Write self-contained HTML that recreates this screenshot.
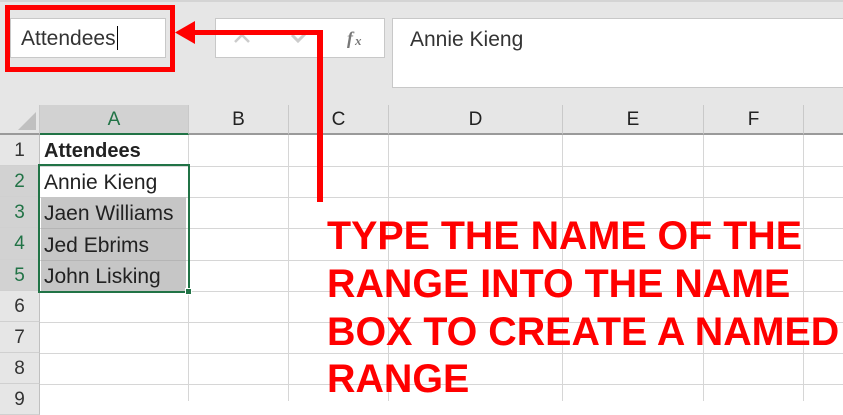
<!DOCTYPE html>
<html><head><meta charset="utf-8"><style>
*{margin:0;padding:0;box-sizing:border-box}
body{width:843px;height:401px;overflow:hidden;position:relative;background:#fff;font-family:"Liberation Sans",sans-serif}
.abs{position:absolute}
.top{left:0;top:0;width:843px;height:105px;background:#e6e6e6;border-top:2px solid #d4d4d4}
.box{background:#fff;border:1px solid #c8c8c8}
.ch{top:105px;height:30px;background:#e6e6e6;border-bottom:2px solid #9a9a9a;border-right:1px solid #c9c9c9;font-size:19px;color:#222;text-align:center;line-height:30px}
.rh{left:0;width:40px;background:#e6e6e6;border-bottom:1px solid #d0d0d0;border-right:1px solid #c0c0c0;font-size:19px;color:#333;text-align:center}
.vl{top:135px;width:1px;height:266px;background:#d6d6d6}
.hl{left:40px;width:803px;height:1px;background:#d6d6d6}
.cell{left:44px;font-size:21px;color:#222;white-space:nowrap}
.red{color:#f00;font-weight:bold;font-size:40px;left:327px;transform:scaleX(0.985);transform-origin:left;white-space:nowrap;line-height:40px}
</style></head><body>
<div class="abs top"></div>
<div class="abs box" style="left:10px;top:18px;width:156px;height:40px"></div>
<div class="abs" style="left:21px;top:26px;font-size:21px;color:#333;white-space:nowrap">Attendees<span style="display:inline-block;width:1px;height:24px;background:#000;vertical-align:-5px;margin-left:1px"></span></div>
<div class="abs box" style="left:215px;top:18px;width:170px;height:40px"></div>
<svg class="abs" style="left:230px;top:28px" width="150" height="22"><path d="M5 14 L12 7 L19 14" stroke="#ccc" stroke-width="2.5" fill="none"/><path d="M62 7 L68 13 L77 4" stroke="#ccc" stroke-width="3" fill="none"/><text x="117" y="16" font-family="Liberation Serif" font-style="italic" font-weight="bold" font-size="18" fill="#777">f</text><text x="125" y="17" font-family="Liberation Serif" font-style="italic" font-weight="bold" font-size="13" fill="#777">x</text></svg>
<div class="abs box" style="left:392px;top:18px;width:460px;height:70px"></div>
<div class="abs" style="left:410px;top:28px;font-size:21px;color:#333">Annie Kieng</div>

<div class="abs ch" style="left:0;width:40px;background:#e6e6e6"></div>
<svg class="abs" style="left:16px;top:110px" width="22" height="22"><path d="M20 2 L20 20 L2 20 Z" fill="#c0c0c0"/></svg>
<div class="abs ch" style="left:40px;width:149px;background:#d2d2d2;color:#217346;border-bottom:2px solid #217346">A</div>
<div class="abs ch" style="left:189px;width:100px">B</div>
<div class="abs ch" style="left:289px;width:100px">C</div>
<div class="abs ch" style="left:389px;width:174px">D</div>
<div class="abs ch" style="left:563px;width:141px">E</div>
<div class="abs ch" style="left:704px;width:100px">F</div>
<div class="abs ch" style="left:804px;width:50px"></div>

<div class="abs vl" style="left:188px"></div>
<div class="abs vl" style="left:288px"></div>
<div class="abs vl" style="left:388px"></div>
<div class="abs vl" style="left:562px"></div>
<div class="abs vl" style="left:703px"></div>
<div class="abs vl" style="left:803px"></div>
<div class="abs hl" style="top:166px"></div>
<div class="abs hl" style="top:197px"></div>
<div class="abs hl" style="top:228px"></div>
<div class="abs hl" style="top:260px"></div>
<div class="abs hl" style="top:291px"></div>
<div class="abs hl" style="top:322px"></div>
<div class="abs hl" style="top:353px"></div>
<div class="abs hl" style="top:384px"></div>

<div class="abs rh" style="top:135px;height:31px;line-height:31px">1</div>
<div class="abs rh" style="top:166px;height:31px;line-height:31px;background:#d2d2d2;color:#217346">2</div>
<div class="abs rh" style="top:197px;height:31px;line-height:31px;background:#d2d2d2;color:#217346">3</div>
<div class="abs rh" style="top:228px;height:32px;line-height:32px;background:#d2d2d2;color:#217346">4</div>
<div class="abs rh" style="top:260px;height:31px;line-height:31px;background:#d2d2d2;color:#217346">5</div>
<div class="abs rh" style="top:291px;height:31px;line-height:31px">6</div>
<div class="abs rh" style="top:322px;height:31px;line-height:31px">7</div>
<div class="abs rh" style="top:353px;height:31px;line-height:31px">8</div>
<div class="abs rh" style="top:384px;height:31px;line-height:31px">9</div>

<div class="abs" style="left:41px;top:197px;width:145px;height:94px;background:#c6c6c6"></div>
<div class="abs" style="left:41px;top:228px;width:145px;height:1px;background:#b5b5b5"></div>
<div class="abs" style="left:41px;top:260px;width:145px;height:1px;background:#b5b5b5"></div>
<div class="abs" style="left:38px;top:164px;width:152px;height:129px;border:2px solid #217346"></div>
<div class="abs" style="left:185px;top:288px;width:7px;height:7px;background:#217346;border:1px solid #fff"></div>

<div class="abs cell" style="top:140px;font-weight:bold;font-size:20px">Attendees</div>
<div class="abs cell" style="top:171px">Annie Kieng</div>
<div class="abs cell" style="top:202px">Jaen Williams</div>
<div class="abs cell" style="top:234px">Jed Ebrims</div>
<div class="abs cell" style="top:265px">John Lisking</div>

<div class="abs" style="left:5px;top:5px;width:170px;height:67px;border:5px solid #f00"></div>
<div class="abs" style="left:190px;top:30px;width:133px;height:5px;background:#f00"></div>
<div class="abs" style="left:317px;top:30px;width:6px;height:172px;background:#f00"></div>
<svg class="abs" style="left:174px;top:20px" width="22" height="26"><path d="M1 12.5 L21 1 L21 24 Z" fill="#f00"/></svg>

<div class="abs red" style="top:216px">TYPE THE NAME OF THE</div>
<div class="abs red" style="top:264px">RANGE INTO THE NAME</div>
<div class="abs red" style="top:312px">BOX TO CREATE A NAMED</div>
<div class="abs red" style="top:359px">RANGE</div>
</body></html>
